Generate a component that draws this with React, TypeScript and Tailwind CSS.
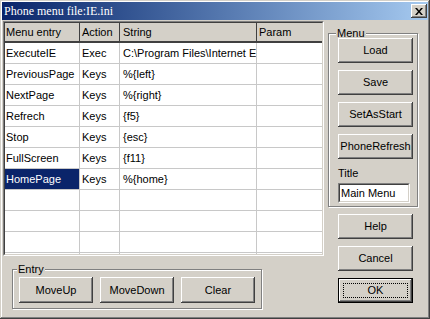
import React from "react";

type Row = {
  entry: string;
  action: string;
  str: string;
  param: string;
};

const rows: Row[] = [
  { entry: "ExecuteIE", action: "Exec", str: "C:\\Program Files\\Internet Explorer\\iexplore.exe", param: "" },
  { entry: "PreviousPage", action: "Keys", str: "%{left}", param: "" },
  { entry: "NextPage", action: "Keys", str: "%{right}", param: "" },
  { entry: "Refrech", action: "Keys", str: "{f5}", param: "" },
  { entry: "Stop", action: "Keys", str: "{esc}", param: "" },
  { entry: "FullScreen", action: "Keys", str: "{f11}", param: "" },
  { entry: "HomePage", action: "Keys", str: "%{home}", param: "" },
  { entry: "", action: "", str: "", param: "" },
  { entry: "", action: "", str: "", param: "" },
  { entry: "", action: "", str: "", param: "" },
  { entry: "", action: "", str: "", param: "" },
];

// classic raised 3d edge
const raised =
  "shadow-[inset_-1px_-1px_#404040,inset_1px_1px_#ffffff,inset_-2px_-2px_#808080,inset_2px_2px_#d4d0c8]";

function WinButton({ label, className = "" }: { label: string; className?: string }) {
  return (
    <button
      className={`bg-[#d4d0c8] ${raised} flex items-center justify-center text-black ${className}`}
    >
      {label}
    </button>
  );
}

function GroupBox({
  title,
  className = "",
  children,
}: {
  title: string;
  className?: string;
  children: React.ReactNode;
}) {
  return (
    <fieldset
      className={`border border-[#808080] shadow-[1px_1px_0_#ffffff,inset_1px_1px_0_#ffffff] m-0 ${className}`}
    >
      <legend className="-ml-[2px] px-[1px] leading-[10px] bg-[#d4d0c8]">{title}</legend>
      {children}
    </fieldset>
  );
}

export default function App() {
  return (
    <div className="w-[430px] h-[319px] bg-[#d4d0c8] p-[2px] shadow-[inset_-1px_-1px_#404040,inset_1px_1px_#d4d0c8,inset_-2px_-2px_#808080,inset_2px_2px_#ffffff] font-['Liberation_Sans',Arial,sans-serif] text-[11px] text-black overflow-hidden">
      {/* Title bar */}
      <div className="h-[18px] flex items-center justify-between bg-gradient-to-r from-[#0a246a] to-[#a6caf0] pl-[2px] pr-[1px]">
        <span className="font-['Liberation_Serif',serif] text-[12px] text-white leading-none">
          Phone menu file:IE.ini
        </span>
        <button className={`w-[16px] h-[14px] bg-[#d4d0c8] ${raised} flex items-center justify-center`}>
          <svg width="8" height="7" viewBox="0 0 8 7">
            <path d="M0 0h2l2 2.5L6 0h2L5 3.5 8 7H6L4 4.5 2 7H0l3-3.5z" fill="#000" />
          </svg>
        </button>
      </div>

      {/* Body */}
      <div className="flex mt-[1px] pl-[1px]">
        {/* Left side */}
        <div className="w-[321px] flex flex-col">
          <div className="h-[235px] border border-t-[#808080] border-l-[#808080] border-b-white border-r-white">
            <div className="h-full border border-t-[#404040] border-l-[#404040] border-b-[#d4d0c8] border-r-[#d4d0c8] bg-white overflow-hidden">
              <div className="grid grid-cols-[75px_40px_137px_1fr]">
                <div className="h-[20px] flex items-center pl-[1px] bg-[#d4d0c8] border-r border-b-2 border-[#404040]">Menu entry</div>
                <div className="h-[20px] flex items-center pl-[2px] bg-[#d4d0c8] border-r border-b-2 border-[#404040]">Action</div>
                <div className="h-[20px] flex items-center pl-[3px] bg-[#d4d0c8] border-r border-b-2 border-[#404040]">String</div>
                <div className="h-[20px] flex items-center pl-[2px] bg-[#d4d0c8] border-b-2 border-[#404040]">Param</div>

                {rows.map((r, i) => (
                  <React.Fragment key={i}>
                    <div
                      className={`h-[21px] flex items-center pl-[1px] border-r border-b border-[#c8c8c8] whitespace-nowrap overflow-hidden ${
                        r.entry === "HomePage" ? "bg-[#0a246a] text-white" : ""
                      }`}
                    >
                      {r.entry}
                    </div>
                    <div className="h-[21px] flex items-center pl-[2px] border-r border-b border-[#c8c8c8] whitespace-nowrap overflow-hidden">
                      {r.action}
                    </div>
                    <div className="h-[21px] flex items-center pl-[3px] border-r border-b border-[#c8c8c8] whitespace-nowrap overflow-hidden">
                      {r.str}
                    </div>
                    <div className="h-[21px] flex items-center pl-[2px] border-b border-[#c8c8c8] whitespace-nowrap overflow-hidden">
                      {r.param}
                    </div>
                  </React.Fragment>
                ))}
              </div>
            </div>
          </div>

          {/* Entry group */}
          <GroupBox title="Entry" className="ml-[9px] mt-[8px] w-[248px] pl-[6px] pr-[6px] pt-[3px] pb-[5px]">
            <div className="flex gap-[7px]">
              <WinButton label="MoveUp" className="w-[74px] h-[26px]" />
              <WinButton label="MoveDown" className="w-[74px] h-[26px]" />
              <WinButton label="Clear" className="w-[74px] h-[26px]" />
            </div>
          </GroupBox>
        </div>

        {/* Right side */}
        <div className="ml-[4px] mt-[7px] w-[90px] flex flex-col">
          <GroupBox title="Menu" className="w-[90px] pl-[9px] pr-[4px] pt-0 pb-[3px]">
            <div className="flex flex-col gap-[7px]">
              <WinButton label="Load" className="w-[75px] h-[25px]" />
              <WinButton label="Save" className="w-[75px] h-[25px]" />
              <WinButton label="SetAsStart" className="w-[75px] h-[25px]" />
              <WinButton label="PhoneRefresh" className="w-[75px] h-[25px]" />
            </div>
            <div className="mt-[8px] leading-[12px]">Title</div>
            <div className="mt-[4px] w-[72px] h-[20px] border border-t-[#808080] border-l-[#808080] border-b-white border-r-white">
              <div className="h-full border border-t-[#404040] border-l-[#404040] border-b-[#d4d0c8] border-r-[#d4d0c8] bg-white flex items-center pl-[1px] whitespace-nowrap overflow-hidden">
                Main Menu
              </div>
            </div>
          </GroupBox>
          <div className="flex flex-col gap-[7px] mt-[7px] pl-[10px]">
            <WinButton label="Help" className="w-[75px] h-[25px]" />
            <WinButton label="Cancel" className="w-[75px] h-[25px]" />
            <button className="relative w-[75px] h-[25px] border border-black bg-[#d4d0c8] shadow-[inset_-1px_-1px_#404040,inset_1px_1px_#ffffff,inset_-2px_-2px_#808080] flex items-center justify-center">
              OK
              <span className="absolute inset-[4px] border border-dotted border-black" />
            </button>
          </div>
        </div>
      </div>
    </div>
  );
}
